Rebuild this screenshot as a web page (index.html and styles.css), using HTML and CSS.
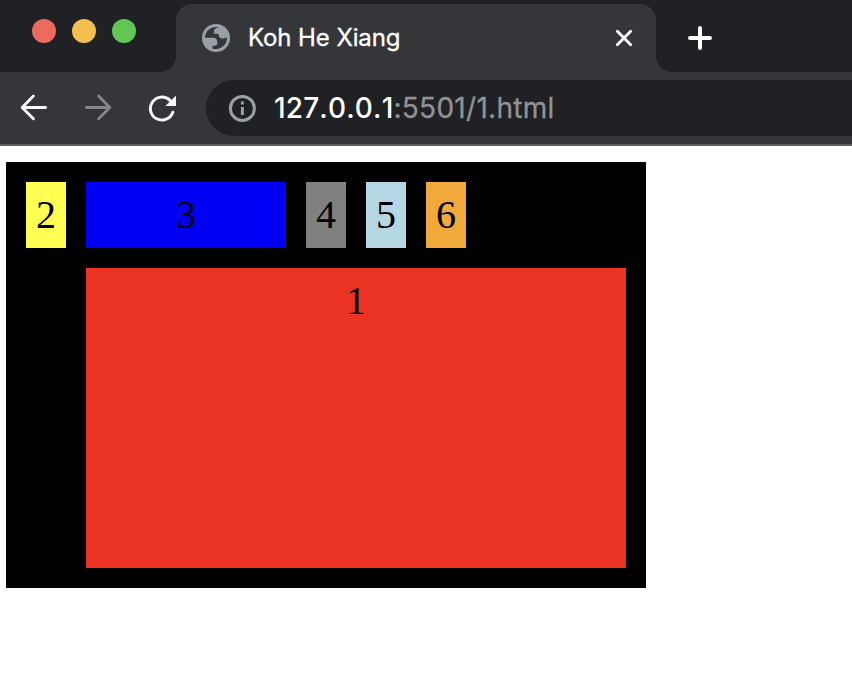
FILE: index.html
```html
<!DOCTYPE html>
<html lang="en">
<head>
<meta charset="utf-8">
<title>Koh He Xiang</title>
<link rel="stylesheet" href="styles.css">
</head>
<body>
<header class="browser">
  <div class="tabs">
    <div class="lights"><i class="light close"></i><i class="light minimise"></i><i class="light expand"></i></div>
    <div class="tab">
      <svg class="globe" viewBox="0 0 28 28"><circle cx="14" cy="14" r="14" fill="#9aa0a6"/><path d="M3 13.7C3.2 7.5 8 3 14 3h2.3c-1 1-3.9 1.5-4.2 3.2v2.1c0 .6-.5 1.2-1.2 1.4 2 .1 4.4-.2 5.5.5.8.6.3 2.3 1.2 3.3 1.5 1.2 3.8 1.2 5.3.4l2.1-.3C25.2 20 20.2 25 14 25c-1.2 0-2.4-.2-3.5-.6v-2.6h2.3c1.5 0 2.6-1.1 2.6-2.5 0-3.1-1-5.6-4.2-5.6Z" fill="#35363a"/></svg>
      <span class="title">Koh He Xiang</span>
      <svg class="dismiss" viewBox="0 0 16 16"><path d="m1.3 1.3 13.4 13.4m0-13.4L1.3 14.7"/></svg>
    </div>
    <svg class="plus" viewBox="0 0 24 24"><path d="M12 2v20M2 12h20"/></svg>
  </div>
  <nav class="toolbar">
    <svg class="nav" viewBox="0 0 28 28"><path d="M25.6 13.5H2.8M13.4 2.1 2.2 13.5l11.2 11.2"/></svg>
    <svg class="nav disabled" viewBox="0 0 28 28"><path d="M2.4 13.5h22.8M14.6 2.1 25.8 13.5 14.6 24.7"/></svg>
    <svg class="nav" viewBox="0 0 28 28"><path d="M24.8 18.2A11.5 11.5 0 1 1 22 6.4"/><path class="tip" d="M28 1.4V12H17.4Z"/></svg>
    <div class="address">
      <svg class="info" viewBox="0 0 28 28"><circle cx="14.4" cy="14.4" r="12"/><path d="M14.4 12.9v8M14.4 7.6v3"/></svg>
      <span class="url"><b>127.0.0.1</b>:5501/1.html</span>
    </div>
  </nav>
</header>
<main class="container">
  <div class="box yellow">2</div>
  <div class="box blue">3</div>
  <div class="box gray">4</div>
  <div class="box lightblue">5</div>
  <div class="box orange">6</div>
  <div class="box red">1</div>
</main>
</body>
</html>
```
FILE: styles.css
```css
* { box-sizing: border-box; }
body { margin: 0; width: 852px; height: 690px; overflow: hidden; background: #fff; }
svg { display: block; flex: none; overflow: visible; }

.browser { height: 146px; background: #35363a; border-bottom: 2px solid #5d5a60; font-family: Inter, sans-serif; }
.tabs { display: flex; height: 72px; padding-top: 4px; background: #202124; }
.lights { display: flex; width: 176px; padding: 15px 0 0 32px; gap: 16px; }
.light { width: 24px; height: 24px; border-radius: 50%; }
.close { background: #ed6a5f; }
.minimise { background: #f5bf4f; }
.expand { background: #62c655; }

.tab { position: relative; display: flex; align-items: center; width: 480px; height: 68px; padding: 0 24px 0 26px; border-radius: 16px 16px 0 0; background: #35363a; }
.tab::before, .tab::after { content: ""; position: absolute; bottom: 0; width: 16px; height: 16px; }
.tab::before { left: -16px; background: radial-gradient(circle at 0 0, #202124 15.5px, #35363a 16.5px); }
.tab::after { right: -16px; background: radial-gradient(circle at 100% 0, #202124 15.5px, #35363a 16.5px); }
.globe { width: 28px; height: 28px; }
.title { margin-left: 18px; color: #fff; font-size: 24px; line-height: 30px; letter-spacing: -0.1px; -webkit-text-stroke: 0.3px #fff; white-space: nowrap; }
.dismiss { width: 16px; height: 16px; margin-left: auto; fill: none; stroke: #fff; stroke-width: 2.8; stroke-linecap: round; }
.plus { width: 24px; height: 24px; margin: 22px 0 0 32px; fill: none; stroke: #fff; stroke-width: 4; stroke-linecap: round; }

.toolbar { display: flex; align-items: center; height: 72px; padding-left: 20px; gap: 36px; }
.nav { width: 28px; height: 28px; fill: none; stroke: #f8f9fa; stroke-width: 2.9; stroke-linecap: round; stroke-linejoin: round; }
.disabled { stroke: #85868a; }
.tip { fill: #f8f9fa; stroke: none; }
.address { display: flex; align-items: center; flex: 1; height: 56px; margin-left: -6px; padding-left: 22px; border-radius: 28px 0 0 28px; background: #202124; }
.info { width: 28px; height: 28px; fill: none; stroke: #9aa0a6; stroke-width: 3; }
.url { margin-left: 18px; color: #919294; font-size: 28px; line-height: 34px; font-kerning: none; letter-spacing: 0.28px; -webkit-text-stroke: 0.3px #919294; white-space: nowrap; }
.url b { color: #fff; font-weight: 500; letter-spacing: 0.15px; -webkit-text-stroke: 0; }

.container { display: grid; grid-template-columns: 40px 200px 40px 40px 40px 140px; grid-template-rows: 66px 300px; gap: 20px; width: 640px; margin: 16px 0 0 6px; padding: 20px; background: #000; }
.box { padding: 10px; color: #000; font: 40px/46px "Liberation Serif", serif; text-align: center; }
.yellow { background: #ffff54; }
.blue { background: #0000f5; }
.gray { background: #808080; }
.lightblue { background: #b5d7e4; }
.orange { background: #f2a93b; }
.red { grid-column: 2 / -1; background: #ea3323; }
```
